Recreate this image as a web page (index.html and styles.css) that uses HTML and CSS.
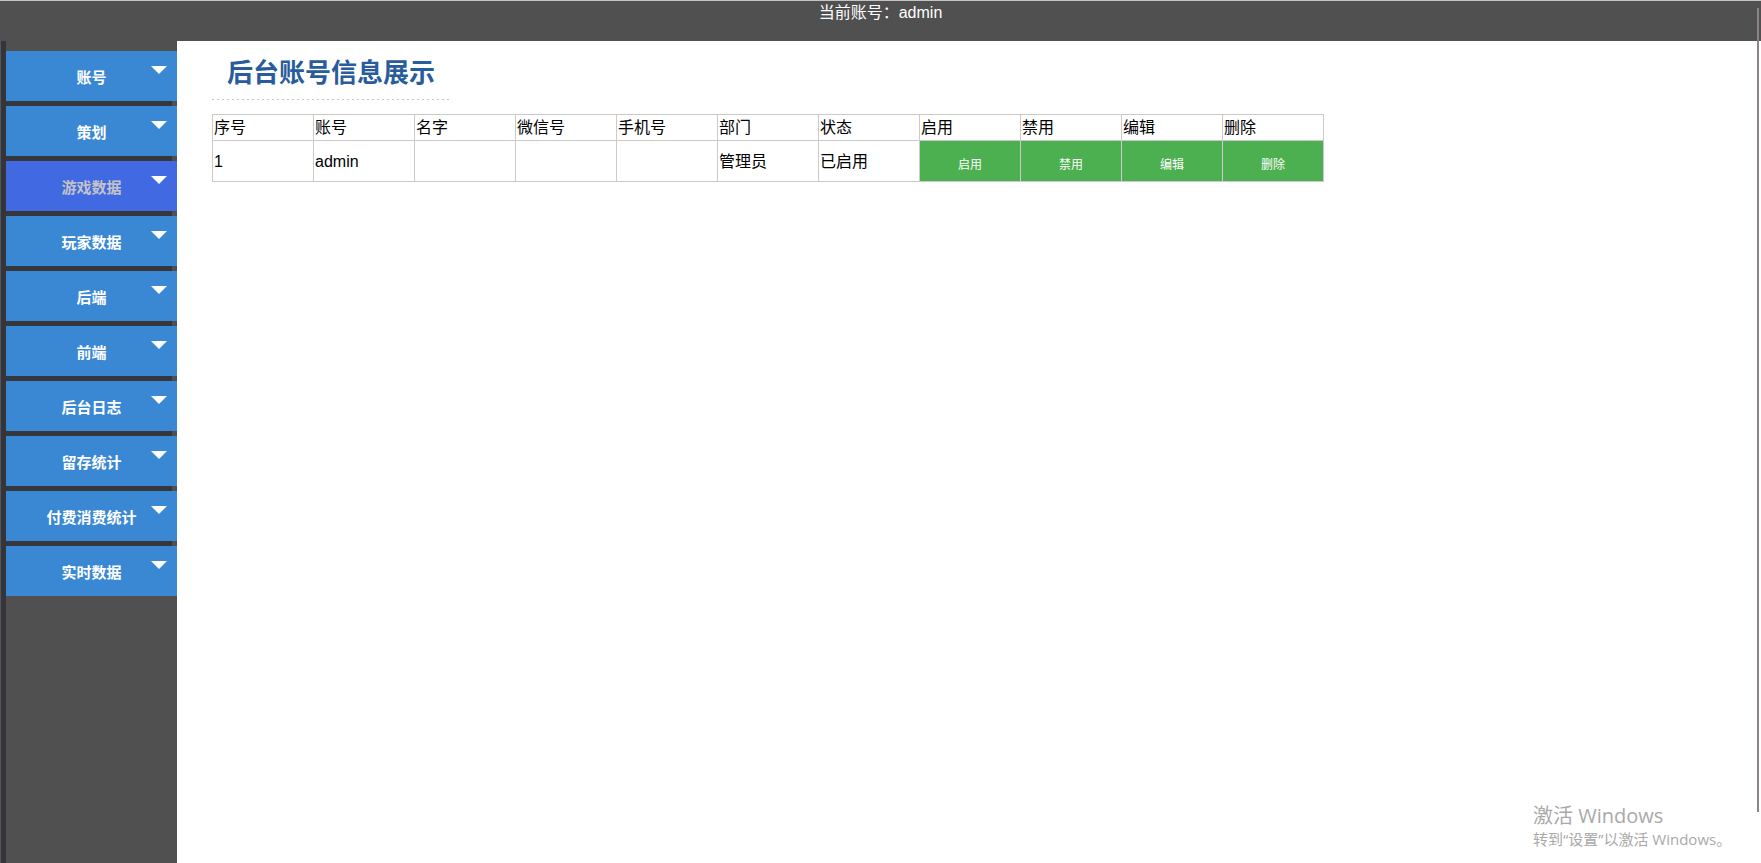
FILE: index.html
```html
<!DOCTYPE html>
<html lang="zh-CN">
<head>
<meta charset="utf-8">
<title>后台账号信息展示</title>
<link rel="stylesheet" href="styles.css">
</head>
<body>
<div class="page">
  <header class="topbar">当前账号：admin</header>
  <div class="body">
    <aside class="sidebar">
      <div class="strip"></div>
      <nav class="menu">
        <div class="menu-item"><div class="menu-head"><span class="label">账号</span><span class="arrow"></span></div></div>
        <div class="menu-item"><div class="menu-head"><span class="label">策划</span><span class="arrow"></span></div></div>
        <div class="menu-item"><div class="menu-head active"><span class="label">游戏数据</span><span class="arrow"></span></div></div>
        <div class="menu-item"><div class="menu-head"><span class="label">玩家数据</span><span class="arrow"></span></div></div>
        <div class="menu-item"><div class="menu-head"><span class="label">后端</span><span class="arrow"></span></div></div>
        <div class="menu-item"><div class="menu-head"><span class="label">前端</span><span class="arrow"></span></div></div>
        <div class="menu-item"><div class="menu-head"><span class="label">后台日志</span><span class="arrow"></span></div></div>
        <div class="menu-item"><div class="menu-head"><span class="label">留存统计</span><span class="arrow"></span></div></div>
        <div class="menu-item"><div class="menu-head"><span class="label">付费消费统计</span><span class="arrow"></span></div></div>
        <div class="menu-item last"><div class="menu-head"><span class="label">实时数据</span><span class="arrow"></span></div></div>
      </nav>
    </aside>
    <main class="content">
      <h2 class="title">后台账号信息展示</h2>
      <table class="grid">
        <thead>
          <tr>
            <td>序号</td><td>账号</td><td>名字</td><td>微信号</td><td>手机号</td><td>部门</td><td>状态</td><td>启用</td><td>禁用</td><td>编辑</td><td>删除</td>
          </tr>
        </thead>
        <tbody>
          <tr>
            <td>1</td><td>admin</td><td></td><td></td><td></td><td>管理员</td><td>已启用</td>
            <td class="btn-cell"><span class="btn">启用</span></td>
            <td class="btn-cell"><span class="btn">禁用</span></td>
            <td class="btn-cell"><span class="btn">编辑</span></td>
            <td class="btn-cell"><span class="btn">删除</span></td>
          </tr>
        </tbody>
      </table>
    </main>
  </div>
  <div class="edge-line"></div>
  <div class="watermark">
    <div class="wm-1">激活 Windows</div>
    <div class="wm-2">转到“设置”以激活 Windows。</div>
  </div>
</div>
</body>
</html>
```

FILE: styles.css
```css
* { box-sizing: border-box; }
html, body { margin: 0; padding: 0; height: 100%; }
body {
  font-family: "Liberation Sans", "Noto Sans CJK SC", sans-serif;
  background: #ffffff;
  overflow: hidden;
}
.page {
  position: relative;
  height: 100vh;
  display: flex;
  flex-direction: column;
}
.topbar {
  height: 41px;
  flex: none;
  background: #505050;
  border-top: 1px solid #c4c4c4;
  color: #ffffff;
  font-size: 16px;
  line-height: 20px;
  padding-top: 2px;
  text-align: center;
}
.body {
  flex: 1;
  display: flex;
  min-height: 0;
}
.sidebar {
  width: 177px;
  flex: none;
  background: #505050;
  display: flex;
}
.strip {
  width: 6px;
  flex: none;
  background: #34353b;
  border-left: 1px solid #55565c;
}
.menu {
  flex: 1;
  padding-top: 10px;
  display: flex;
  flex-direction: column;
}
.menu-item {
  padding-bottom: 5px;
  background: linear-gradient(to right, #35373d calc(100% - 5px), #505050 0);
}
.menu-item.last {
  padding-bottom: 0;
  background: none;
}
.menu-head {
  height: 50px;
  background: #3a88d4;
  display: grid;
  grid-template-columns: 26px 1fr 26px;
  color: #ffffff;
  font-size: 15px;
  font-weight: bold;
}
.menu-head.active {
  background: #4169e1;
  color: #c4c4c8;
}
.label {
  grid-column: 2;
  align-self: center;
  text-align: center;
  padding-top: 3px;
  white-space: nowrap;
  line-height: 20px;
}
.arrow {
  grid-column: 3;
  justify-self: start;
  margin-top: 15px;
  width: 0;
  height: 0;
  border-left: 8px solid transparent;
  border-right: 8px solid transparent;
  border-top: 8px solid #ffffff;
}
.content {
  flex: 1;
  padding: 0 35px;
}
.title {
  width: 237px;
  margin: 0;
  padding: 14px 0 8px 15px;
  font-size: 26px;
  line-height: 37px;
  font-weight: bold;
  color: #285c9c;
  background: repeating-linear-gradient(to right, #c8c8c8 0 2px, transparent 2px 5px) left bottom / 100% 1px no-repeat;
  white-space: nowrap;
}
.grid {
  margin-top: 14px;
  border-collapse: collapse;
  font-size: 16px;
  color: #000000;
}
.grid td {
  border: 1px solid #cacaca;
  width: 101px;
  padding: 0 1px;
  line-height: 20px;
  vertical-align: middle;
}
.grid thead td { height: 26px; padding-top: 1px; }
.grid tbody td { height: 41px; padding-top: 2px; }
.grid td.btn-cell {
  padding: 0;
  background: #4caf50;
  text-align: center;
}
.btn {
  display: block;
  color: #ffffff;
  font-size: 12px;
  padding-top: 7px;
}
.edge-line {
  position: absolute;
  left: 1757px;
  top: 8px;
  width: 2px;
  height: 804px;
  background: #8a8484;
}
.watermark {
  position: absolute;
  left: 1533px;
  top: 803px;
  color: #a9a9a9;
  font-family: "Open Sans", "Noto Sans CJK SC", sans-serif;
}
.wm-1 { font-size: 20px; line-height: 26px; }
.wm-2 { font-size: 15px; line-height: 20px; }
```
